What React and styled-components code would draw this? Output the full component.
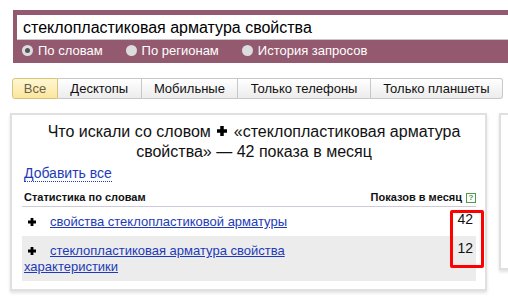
import React from "react";
import styled, { createGlobalStyle } from "styled-components";

const GlobalStyle = createGlobalStyle`
  html, body {
    margin: 0;
    padding: 0;
    background: #fff;
    overflow: hidden;
  }
  body {
    font-family: "Liberation Sans", Arial, sans-serif;
    color: #000;
  }
`;

const tabs = ["Все", "Десктопы", "Мобильные", "Только телефоны", "Только планшеты"];

const rows = [
  { text: "свойства стеклопластиковой арматуры", count: 42 },
  { text: "стеклопластиковая арматура свойства характеристики", count: 12 },
];

function Plus({ size = 8 }) {
  return (
    <svg width={size} height={size} viewBox="0 0 8 8">
      <path d="M2.6 0h2.8v2.6H8v2.8H5.4V8H2.6V5.4H0V2.6h2.6z" fill="#000" />
    </svg>
  );
}

export default function App() {
  return (
    <Page>
      <GlobalStyle />
      <SearchBar>
        <SearchInput>стеклопластиковая арматура свойства</SearchInput>
        <RadioRow>
          <RadioItem>
            <Radio checked />
            По словам
          </RadioItem>
          <RadioItem>
            <Radio />
            По регионам
          </RadioItem>
          <RadioItem>
            <Radio />
            История запросов
          </RadioItem>
        </RadioRow>
      </SearchBar>

      <Tabs>
        {tabs.map((t, i) => (
          <Tab key={t} active={i === 0}>
            {t}
          </Tab>
        ))}
      </Tabs>

      <Panels>
        <Panel>
          <Title>
            Что искали со словом <Plus size={10} /> «стеклопластиковая арматура
            <br />
            свойства» — 42 показа в месяц
          </Title>
          <AddAll>Добавить все</AddAll>
          <TableHead>
            <span>Статистика по словам</span>
            <span>
              Показов в месяц <Help>?</Help>
            </span>
          </TableHead>
          <Rows>
            {rows.map((r, i) => (
              <Row key={r.text} shaded={i % 2 === 1}>
                <RowText>
                  <PlusBox>
                    <Plus />
                  </PlusBox>
                  <WordLink>{r.text}</WordLink>
                </RowText>
                <Count>{r.count}</Count>
              </Row>
            ))}
            <Highlight />
          </Rows>
        </Panel>
        <SidePanel />
      </Panels>
    </Page>
  );
}

const Page = styled.div`
  width: 508px;
  height: 300px;
  padding-top: 10px;
  box-sizing: border-box;
  overflow: hidden;
`;

const SearchBar = styled.div`
  margin-left: 13px;
  background: #93596e;
  padding: 5px 0 6px 4px;
`;

const SearchInput = styled.div`
  height: 25px;
  box-sizing: border-box;
  background: #fff;
  border-bottom: 1px solid #c9c9c9;
  padding: 3px 0 0 6px;
  font-size: 16px;
  line-height: 20px;
  color: #000;
`;

const RadioRow = styled.div`
  display: flex;
  margin-top: 4px;
  height: 13px;
  align-items: center;
`;

const RadioItem = styled.label`
  display: flex;
  align-items: center;
  gap: 5px;
  color: #fff;
  font-size: 13px;
  margin-left: 5px;
  margin-right: 18px;
`;

const Radio = styled.span`
  width: 11px;
  height: 11px;
  border-radius: 50%;
  background: #dcdcdc;
  box-sizing: border-box;
  display: inline-flex;
  align-items: center;
  justify-content: center;
  &::after {
    content: "";
    width: 5px;
    height: 5px;
    border-radius: 50%;
    background: ${(p) => (p.checked ? "#555" : "transparent")};
  }
`;

const Tabs = styled.div`
  display: flex;
  margin: 15px 0 0 12px;
  width: 491px;
`;

const Tab = styled.div`
  height: 21px;
  box-sizing: border-box;
  display: flex;
  align-items: center;
  justify-content: center;
  font-size: 13px;
  color: ${(p) => (p.active ? "#6b6049" : "#111")};
  border: 1px solid ${(p) => (p.active ? "#d9c27a" : "#c8c8c8")};
  border-left-width: 0;
  background: ${(p) =>
    p.active
      ? "linear-gradient(#fff7d2, #fbe69e)"
      : "linear-gradient(#ffffff, #ececec)"};
  padding: 0 12px;
  flex: 1 1 auto;
  &:first-child {
    border-left-width: 1px;
    border-radius: 3px 0 0 3px;
    flex: 0 0 46px;
    padding: 0;
  }
  &:last-child {
    border-radius: 0 3px 3px 0;
  }
`;

const Panels = styled.div`
  display: flex;
  gap: 12px;
  margin: 14px 0 0 10px;
  align-items: flex-start;
`;

const Panel = styled.div`
  width: 477px;
  flex: 0 0 477px;
  box-sizing: border-box;
  border: 2px solid #e0e0e0;
  box-shadow: 0 2px 3px rgba(0, 0, 0, 0.12);
  padding: 7px 9px 8px 10px;
`;

const SidePanel = styled.div`
  flex: 0 0 40px;
  height: 157px;
  box-sizing: border-box;
  border: 2px solid #e0e0e0;
  box-shadow: 0 2px 3px rgba(0, 0, 0, 0.12);
`;

const Title = styled.div`
  text-align: center;
  font-size: 16px;
  line-height: 20px;
  color: #111;
  padding-left: 10px;
  svg {
    vertical-align: 1px;
    margin: 0 2px;
  }
`;

const AddAll = styled.span`
  display: inline-block;
  margin: 3px 0 0 2px;
  font-size: 14px;
  line-height: 16px;
  color: #1d3bb8;
  border-bottom: 1px dotted #1d3bb8;
`;

const TableHead = styled.div`
  display: flex;
  justify-content: space-between;
  align-items: flex-end;
  margin-top: 9px;
  padding: 0 0 3px 2px;
  font-size: 11px;
  font-weight: bold;
  color: #111;
  border-bottom: 1px solid #cfcad8;
`;

const Help = styled.span`
  display: inline-flex;
  align-items: center;
  justify-content: center;
  width: 8px;
  height: 8px;
  border: 1px solid #4e9a4a;
  color: #4e9a4a;
  font-size: 8px;
  line-height: 8px;
  margin-left: 1px;
  vertical-align: 1px;
`;

const Rows = styled.div`
  position: relative;
`;

const Row = styled.div`
  display: flex;
  justify-content: space-between;
  align-items: flex-start;
  padding: 7px 3px 6px 2px;
  background: ${(p) => (p.shaded ? "#ececec" : "transparent")};
`;

const RowText = styled.div`
  font-size: 13px;
  line-height: 16px;
  width: 330px;
`;

const PlusBox = styled.span`
  display: inline-block;
  width: 26px;
  padding-left: 4px;
  box-sizing: border-box;
`;

const WordLink = styled.a`
  color: #1d3bb8;
  text-decoration: underline;
`;

const Count = styled.div`
  font-size: 14px;
  line-height: 16px;
  margin-top: -3px;
  color: #111;
`;

const Highlight = styled.div`
  position: absolute;
  right: -8px;
  top: 3px;
  width: 34px;
  height: 58px;
  box-sizing: border-box;
  border: 3px solid #f00;
  border-radius: 2px;
`;
